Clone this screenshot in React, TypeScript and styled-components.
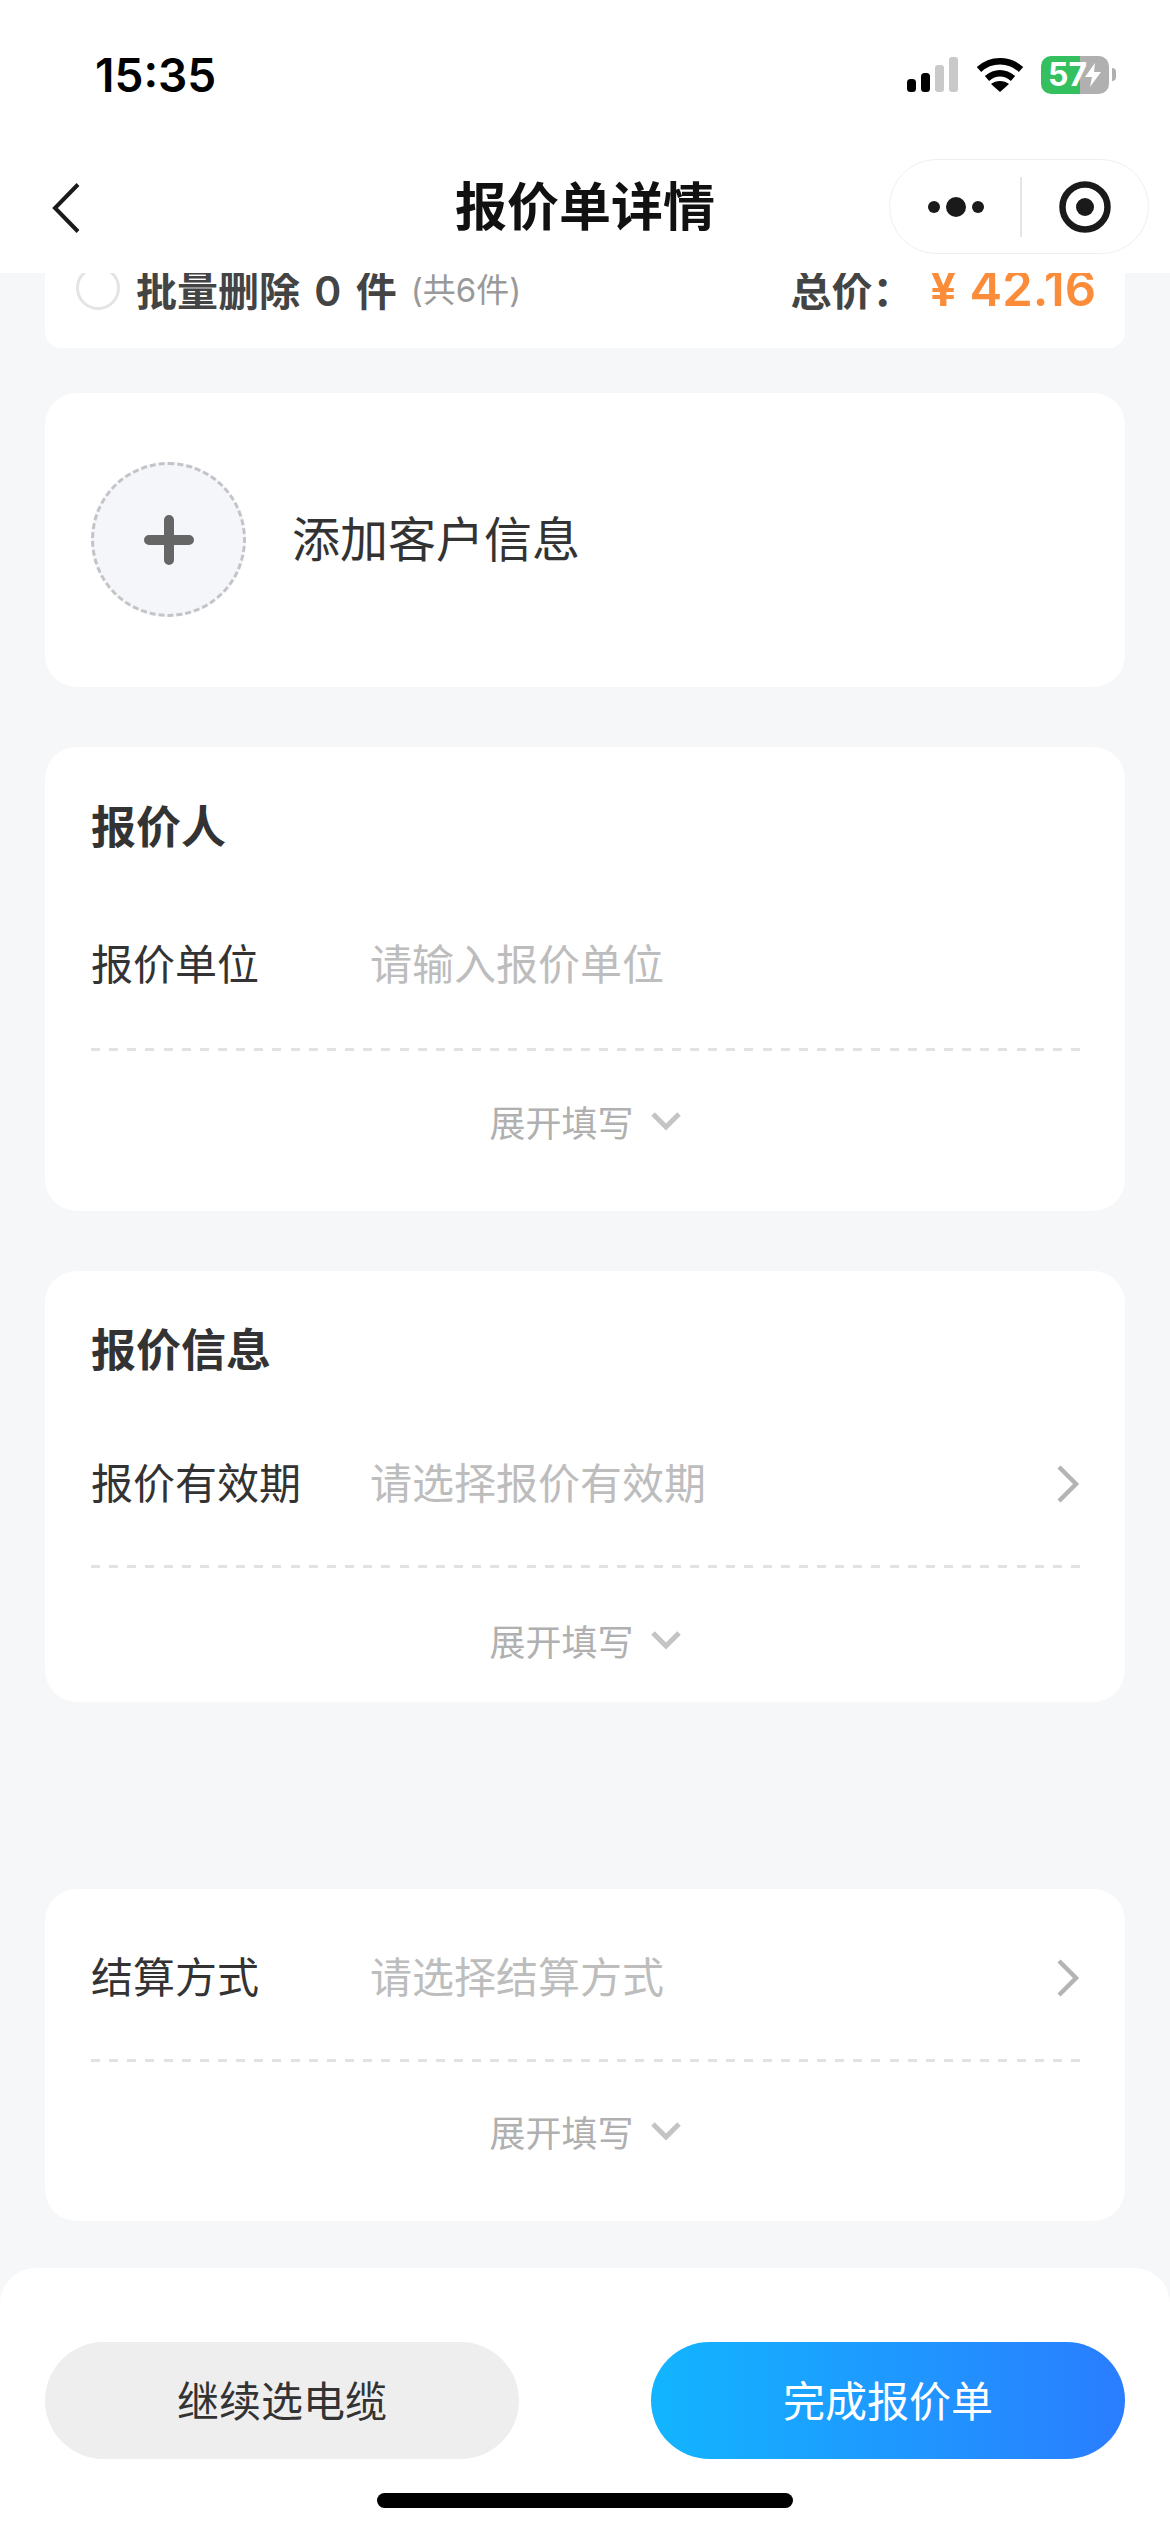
import React from 'react';
import styled, {createGlobalStyle} from 'styled-components';

const GlobalStyle = createGlobalStyle`
  html, body {
    margin: 0;
    padding: 0;
    background: #F6F7F9;
    font-family: "Inter", "Noto Sans CJK SC", sans-serif;
  }
  * {
    box-sizing: border-box;
  }
`;

const Page = styled.div`
  width: 1170px;
  height: 2532px;
  display: flex;
  flex-direction: column;
  overflow: hidden;
  background: #F6F7F9;
`;

const Header = styled.header`
  position: relative;
  z-index: 2;
  flex: none;
  height: 273px;
  background: #fff;
`;

const StatusBar = styled.div`
  height: 150px;
  display: flex;
  align-items: center;
  justify-content: space-between;
  padding: 0 61px 0 95px;
`;

const Clock = styled.span`
  font-family: "Inter", "Liberation Sans", sans-serif;
  font-size: 46px;
  font-weight: 600;
  color: #000;
`;

const StatusIcons = styled.div`
  display: flex;
  align-items: center;
  gap: 17px;
`;

const Battery = styled.div`
  position: relative;
  width: 68px;
  height: 38px;
  border-radius: 10px;
  background: linear-gradient(90deg, #34C05F 57%, #B0B0B0 57%);
  color: #fff;
  font-family: "Inter", "Liberation Sans", sans-serif;
  font-size: 32px;
  line-height: 38px;
  font-weight: 700;
  padding-left: 7px;

  svg {
    position: absolute;
    right: 7px;
    top: 7px;
  }

  &::after {
    content: '';
    position: absolute;
    right: -7px;
    top: 12px;
    width: 4px;
    height: 13px;
    border-radius: 0 4px 4px 0;
    background: #B0B0B0;
  }
`;

const NavBar = styled.nav`
  height: 123px;
  display: grid;
  grid-template-columns: 1fr auto 1fr;
  padding: 9px 21px 0;
`;

const BackButton = styled.div`
  padding: 24px 0 0 31px;
`;

const NavTitle = styled.h1`
  margin: 0;
  font-size: 52px;
  line-height: 98px;
  font-weight: 700;
  color: #111;
`;

const Capsule = styled.div`
  justify-self: end;
  width: 260px;
  height: 95px;
  padding-left: 4px;
  border: 1.5px solid #EFEFEF;
  border-radius: 48px;
  background: #fff;
  display: flex;
  align-items: center;
`;

const CapsuleSide = styled.div`
  flex: 1;
  display: flex;
  justify-content: center;
  align-items: center;
`;

const CapsuleLine = styled.div`
  width: 2px;
  height: 60px;
  background: #E5E5E5;
`;

const Content = styled.main`
  flex: 1;
  min-height: 0;
  display: flex;
  flex-direction: column;
  padding: 0 45px;
`;

const Summary = styled.section`
  flex: none;
  height: 100px;
  margin-top: -25px;
  padding: 0 29px 0 31px;
  background: #fff;
  border-radius: 0 0 16px 16px;
  display: flex;
  align-items: flex-start;
  justify-content: space-between;
`;

const SummaryLeft = styled.div`
  display: flex;
  align-items: center;
  height: 80px;
`;

const Radio = styled.div`
  width: 44px;
  height: 44px;
  border-radius: 50%;
  border: 3px solid #E4E4E4;
  background: #fff;
  margin-right: 16px;
`;

const BatchText = styled.span`
  font-size: 41px;
  font-weight: 600;
  color: #444;
  word-spacing: 4px;
`;

const BatchCount = styled.span`
  font-size: 33px;
  color: #999;
  margin-left: 14px;
`;

const SummaryRight = styled.div`
  display: flex;
  align-items: center;
  height: 80px;
`;

const TotalLabel = styled.span`
  font-size: 41px;
  font-weight: 600;
  color: #444;
  margin-right: 16px;
`;

const Price = styled.span`
  font-size: 49px;
  font-weight: 600;
  color: #FA8C3A;
`;

const Card = styled.section<{$mt: number; $pt: number; $pb: number}>`
  flex: none;
  margin-top: ${p => p.$mt}px;
  padding: ${p => p.$pt}px 45px ${p => p.$pb}px 46px;
  background: #fff;
  border-radius: 32px;
`;

const AddCustomer = styled.div`
  display: flex;
  align-items: center;
  gap: 46px;
`;

const AddCircle = styled.div`
  width: 155px;
  height: 155px;
  border-radius: 50%;
  border: 3px dashed #C4C4C8;
  background: #F5F6FA;
  display: flex;
  align-items: center;
  justify-content: center;
`;

const AddLabel = styled.span`
  font-size: 48px;
  font-weight: 400;
  color: #333;
  padding-bottom: 7px;
`;

const CardTitle = styled.h2<{$mb: number}>`
  margin: 0 0 ${p => p.$mb}px;
  font-size: 45px;
  line-height: 52px;
  font-weight: 700;
  color: #333;
`;

const Row = styled.div<{$mb: number}>`
  height: 100px;
  margin-bottom: ${p => p.$mb}px;
  padding-bottom: 7px;
  display: flex;
  align-items: center;

  svg {
    margin-top: 7px;
  }
`;

const RowLabel = styled.span`
  flex: none;
  width: 279px;
  font-size: 42px;
  color: #333;
`;

const RowValue = styled.span`
  flex: 1;
  font-size: 42px;
  color: #BDBDBD;
`;

const Dashed = styled.div`
  height: 3px;
  background: repeating-linear-gradient(90deg, #E2E2E2 0 9px, transparent 9px 18.15px);
`;

const Expand = styled.div<{$mt: number}>`
  margin-top: ${p => p.$mt}px;
  height: 52px;
  padding-bottom: 5px;
  display: flex;
  align-items: center;
  justify-content: center;
  gap: 16px;
  font-size: 36px;
  color: #B0B0B0;
`;

const Footer = styled.footer`
  flex: none;
  height: 264px;
  padding: 74px 45px 0;
  background: #fff;
  border-radius: 36px 36px 0 0;
`;

const Buttons = styled.div`
  display: flex;
  justify-content: space-between;
`;

const Button = styled.button<{$primary?: boolean}>`
  width: 474px;
  height: 117px;
  border: none;
  border-radius: 59px;
  padding: 0 0 5px;
  font-family: inherit;
  font-size: 42px;
  color: ${p => (p.$primary ? '#fff' : '#333')};
  background: ${p => (p.$primary ? 'linear-gradient(90deg, #12B5FF, #2A7DFF)' : '#EEEEEE')};
`;

const HomeIndicator = styled.div`
  width: 416px;
  height: 15px;
  margin: 34px auto 0;
  border-radius: 8px;
  background: #000;
`;

const Signal = () => (
    <svg width="52" height="36" viewBox="0 0 52 36">
        <rect x="0" y="22" width="9" height="13" rx="3.5" fill="#000"/>
        <rect x="14" y="16" width="9" height="19" rx="3.5" fill="#000"/>
        <rect x="28" y="8" width="9" height="27" rx="3" fill="#C9C9C9"/>
        <rect x="42" y="0" width="9" height="35" rx="3" fill="#C9C9C9"/>
    </svg>
);

const Wifi = () => (
    <svg width="48" height="36" viewBox="0 0 48 36" fill="none">
        <path d="M3 12.5C15 1.5 33 1.5 45 12.5" stroke="#000" strokeWidth="6.5"/>
        <path d="M11 21.5C19 14.5 29 14.5 37 21.5" stroke="#000" strokeWidth="6.5"/>
        <path d="M24 35L15 27C20 23 28 23 33 27Z" fill="#000"/>
    </svg>
);

const Bolt = () => (
    <svg width="18" height="24" viewBox="0 0 18 24">
        <path d="M11 0L1 14H8L6 24L17 9H10Z" fill="#fff"/>
    </svg>
);

const Back = () => (
    <svg width="28" height="50" viewBox="0 0 28 50" fill="none">
        <path d="M26 1.5L3 25L26 48.5" stroke="#1A1A1A" strokeWidth="4"/>
    </svg>
);

const MoreDots = () => (
    <svg width="58" height="22" viewBox="0 0 58 22">
        <circle cx="6" cy="11" r="6" fill="#1A1A1A"/>
        <circle cx="28" cy="11" r="10" fill="#1A1A1A"/>
        <circle cx="50" cy="11" r="6" fill="#1A1A1A"/>
    </svg>
);

const Target = () => (
    <svg width="52" height="52" viewBox="0 0 52 52" fill="none">
        <circle cx="26" cy="26" r="22.5" stroke="#1A1A1A" strokeWidth="6.5"/>
        <circle cx="26" cy="26" r="9" fill="#1A1A1A"/>
    </svg>
);

const Plus = () => (
    <svg width="50" height="50" viewBox="0 0 50 50">
        <path d="M5 25H45M25 5V45" stroke="#666" strokeWidth="10" strokeLinecap="round"/>
    </svg>
);

const ChevronDown = () => (
    <svg width="32" height="20" viewBox="0 0 32 20" fill="none">
        <path d="M3 3L16 16L29 3" stroke="#C4C4C4" strokeWidth="5"/>
    </svg>
);

const ChevronRight = () => (
    <svg width="24" height="40" viewBox="0 0 24 40" fill="none">
        <path d="M3 3L20 20L3 37" stroke="#B4B4B4" strokeWidth="4.5"/>
    </svg>
);

const App = () => {
    return (
        <Page>
            <GlobalStyle/>
            <Header>
                <StatusBar>
                    <Clock>15:35</Clock>
                    <StatusIcons>
                        <Signal/>
                        <Wifi/>
                        <Battery>
                            57
                            <Bolt/>
                        </Battery>
                    </StatusIcons>
                </StatusBar>
                <NavBar>
                    <BackButton><Back/></BackButton>
                    <NavTitle>报价单详情</NavTitle>
                    <Capsule>
                        <CapsuleSide><MoreDots/></CapsuleSide>
                        <CapsuleLine/>
                        <CapsuleSide><Target/></CapsuleSide>
                    </Capsule>
                </NavBar>
            </Header>
            <Content>
                <Summary>
                    <SummaryLeft>
                        <Radio/>
                        <BatchText>批量删除 0 件</BatchText>
                        <BatchCount>(共6件)</BatchCount>
                    </SummaryLeft>
                    <SummaryRight>
                        <TotalLabel>总价：</TotalLabel>
                        <Price>¥ 42.16</Price>
                    </SummaryRight>
                </Summary>

                <Card $mt={45} $pt={69} $pb={70}>
                    <AddCustomer>
                        <AddCircle><Plus/></AddCircle>
                        <AddLabel>添加客户信息</AddLabel>
                    </AddCustomer>
                </Card>

                <Card $mt={60} $pt={55} $pb={62}>
                    <CardTitle $mb={61}>报价人</CardTitle>
                    <Row $mb={33}>
                        <RowLabel>报价单位</RowLabel>
                        <RowValue>请输入报价单位</RowValue>
                    </Row>
                    <Dashed/>
                    <Expand $mt={46}>展开填写<ChevronDown/></Expand>
                </Card>

                <Card $mt={60} $pt={54} $pb={34}>
                    <CardTitle $mb={57}>报价信息</CardTitle>
                    <Row $mb={31}>
                        <RowLabel>报价有效期</RowLabel>
                        <RowValue>请选择报价有效期</RowValue>
                        <ChevronRight/>
                    </Row>
                    <Dashed/>
                    <Expand $mt={48}>展开填写<ChevronDown/></Expand>
                </Card>

                <Card $mt={187} $pt={39} $pb={62}>
                    <Row $mb={31}>
                        <RowLabel>结算方式</RowLabel>
                        <RowValue>请选择结算方式</RowValue>
                        <ChevronRight/>
                    </Row>
                    <Dashed/>
                    <Expand $mt={45}>展开填写<ChevronDown/></Expand>
                </Card>
            </Content>
            <Footer>
                <Buttons>
                    <Button>继续选电缆</Button>
                    <Button $primary>完成报价单</Button>
                </Buttons>
                <HomeIndicator/>
            </Footer>
        </Page>
    );
};

export default App;
